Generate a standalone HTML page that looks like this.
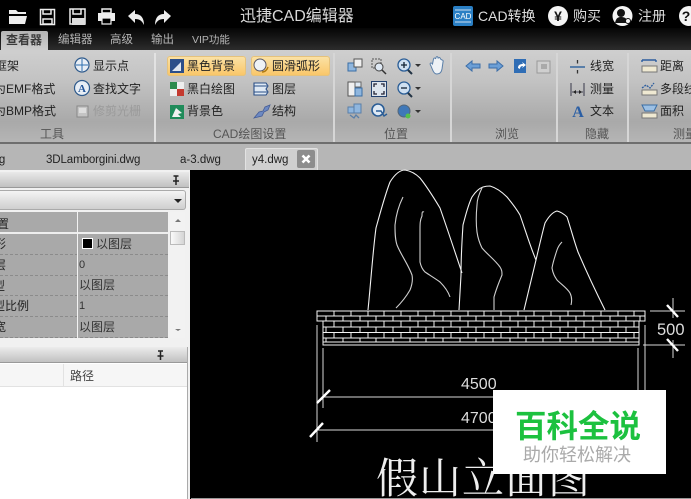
<!DOCTYPE html>
<html lang="zh"><head><meta charset="utf-8"><title>迅捷CAD编辑器</title>
<style>
html,body{margin:0;padding:0;background:#000}
#p{position:relative;width:691px;height:499px;overflow:hidden;font-family:"Liberation Sans","Noto Sans CJK SC",sans-serif;font-size:12px;color:#222}
.b{position:absolute}
.t{position:absolute;white-space:nowrap;line-height:16px;height:16px;filter:blur(.3px)}
svg{position:absolute;left:0;top:0}
</style></head><body><div id="p">
<!-- chrome backgrounds -->
<div class="b" style="left:0;top:0;width:691px;height:30px;background:#000"></div>
<div class="b" style="left:0;top:28px;width:691px;height:22px;background:linear-gradient(#050505,#2c2c2c)"></div>
<div class="b" style="left:0;top:50px;width:691px;height:92px;background:linear-gradient(#cfcfcf 0,#c2c2c2 35%,#a9a9a9 78%,#b5b5b5 100%)"></div>
<div class="b" style="left:0;top:142px;width:691px;height:2px;background:#6e6e6e"></div>
<div class="b" style="left:0;top:144px;width:691px;height:26px;background:#b6b6b6"></div>
<div class="b" style="left:1px;top:31px;width:47px;height:20px;background:linear-gradient(#b4b4b4,#cfcfcf);border-radius:2px 2px 0 0"></div>
<!-- ribbon separators -->
<div class="b" style="left:154px;top:53px;width:2px;height:89px;background:#e2e2e2"></div>
<div class="b" style="left:333px;top:53px;width:2px;height:89px;background:#d6d6d6"></div>
<div class="b" style="left:450px;top:53px;width:2px;height:89px;background:#d6d6d6"></div>
<div class="b" style="left:556px;top:53px;width:2px;height:89px;background:#d6d6d6"></div>
<div class="b" style="left:627px;top:53px;width:2px;height:89px;background:#d6d6d6"></div>
<!-- orange buttons -->
<div class="b" style="left:167px;top:56px;width:79px;height:20px;border-radius:3px;background:linear-gradient(#fbe3a8,#f9c566);box-shadow:0 0 0 1px #e5c27c inset"></div>
<div class="b" style="left:251px;top:56px;width:79px;height:20px;border-radius:3px;background:linear-gradient(#fbe3a8,#f9c566);box-shadow:0 0 0 1px #e5c27c inset"></div>
<!-- active doc tab -->
<div class="b" style="left:245px;top:148px;width:73px;height:22px;background:#cfcfcf;border:1px solid #e2e2e2;border-bottom:0;box-sizing:border-box;border-radius:2px 2px 0 0"></div>
<div class="b" style="left:297px;top:150px;width:18px;height:18px;background:#8d8d8d;border-radius:2px"></div>
<!-- left panel -->
<div class="b" style="left:0;top:170px;width:190px;height:329px;background:#f1f1f1"></div>
<div class="b" style="left:0;top:172px;width:189px;height:15px;background:linear-gradient(#e9e9e9,#c1c1c1);border-bottom:1px solid #999"></div>
<div class="b" style="left:0;top:190px;width:186px;height:20px;background:linear-gradient(#f4f4f4,#cfcfcf);border:1px solid #aaa;border-left:0;box-sizing:border-box;border-radius:0 3px 3px 0"></div>
<div class="b" style="left:0;top:212px;width:168px;height:126px;background:#a9a9a9"></div>
<div class="b" style="left:0;top:232px;width:168px;height:2px;background:#eee"></div>
<div class="b" style="left:0;top:254px;width:168px;border-top:1px dashed #8b8b8b"></div>
<div class="b" style="left:0;top:275px;width:168px;border-top:1px dashed #8b8b8b"></div>
<div class="b" style="left:0;top:295px;width:168px;border-top:1px dashed #8b8b8b"></div>
<div class="b" style="left:0;top:316px;width:168px;border-top:1px dashed #8b8b8b"></div>
<div class="b" style="left:0;top:337px;width:168px;border-top:1px dashed #8b8b8b"></div>
<div class="b" style="left:77px;top:212px;width:1px;height:126px;background:#f2f2f2"></div>
<div class="b" style="left:170px;top:212px;width:15px;height:126px;background:#f2f2f2"></div>
<div class="b" style="left:170px;top:231px;width:15px;height:14px;background:linear-gradient(90deg,#fafafa,#d5d5d5);border:1px solid #bbb;box-sizing:border-box"></div>
<div class="b" style="left:0;top:347px;width:187px;height:15px;background:linear-gradient(#ececec,#c1c1c1);border-bottom:1px solid #999"></div>
<div class="b" style="left:0;top:363px;width:187px;height:136px;background:#fff"></div>
<div class="b" style="left:0;top:364px;width:187px;height:23px;background:#f6f6f6;border-bottom:1px solid #e2e2e2;box-sizing:border-box"></div>
<div class="b" style="left:63px;top:364px;width:1px;height:23px;background:#e2e2e2"></div>
<div class="b" style="left:187px;top:347px;width:1px;height:152px;background:#aaa"></div>

<!-- CAD drawing -->
<svg width="691" height="499" viewBox="0 0 691 499" fill="none">
<defs><clipPath id="cap"><rect x="317" y="311" width="328" height="10"/></clipPath><clipPath id="bod"><rect x="323" y="321" width="315" height="24"/></clipPath></defs>
<g stroke="#f2f2f2" stroke-width="1.1">
<path d="M368 310C371 280 373 250 376 228C381 210 385 195 390 182C395 174 400 170 405 170C411 171 416 174 420 178C428 188 434 198 440 208C447 228 455 252 462 273"/>
<path d="M459 310L461 275C461 258 462 240 463 225C466 214 468 205 472 197C476 191 480 188 483 187C486 186 488 186 490 186C497 188 502 192 507 197C512 203 516 208 520 215C526 232 530 246 536 260"/>
<path d="M524 310L536 260C539 247 542 234 545 223C549 216 553 212 557 211C561 212 564 214 567 217C571 229 574 241 578 252C587 273 596 292 605 310"/>
</g>
<g stroke="#cfcfcf" stroke-width="1.1">
<path d="M403 197C398 207 396 215 395 225C395 232 395 239 397 245C401 255 408 264 412 275C413 280 412 285 410 290C406 297 401 303 396 308"/>
<path d="M424 212C422 211 422 213 422 216C420 220 420 224 420 230L420 262C421 267 423 270 425 272C431 276 436 279 440 282C445 287 448 291 450 297"/>
<path d="M482 188C479 194 477 199 477 205C476 215 476 224 477 232C478 239 480 244 482 248C488 255 495 260 500 267C502 270 502 272 502 275C499 282 496 290 494 297L494 310"/>
<path d="M562 242C559 245 558 247 557 250C555 256 553 262 552 268C553 274 555 277 557 280C562 285 567 288 570 293C572 297 572 301 571 305"/>
</g>
<!-- bricks -->
<g stroke="#f4f4f4" stroke-width="1">
<path d="M317 311H645V321H639V345H323V321H317Z"/>
<path d="M317 316H645M323 321H639M323 327H639M323 332.500H639M323 338H639M323 342H639"/>
</g>
<g stroke="#f4f4f4" stroke-width="1" clip-path="url(#cap)">
<path d="M334 311v5M351 311v5M368 311v5M384 311v5M401 311v5M418 311v5M434 311v5M451 311v5M468 311v5M484 311v5M501 311v5M518 311v5M534 311v5M551 311v5M568 311v5M584 311v5M601 311v5M618 311v5M634 311v5"/>
<path d="M326 316v5M343 316v5M360 316v5M376 316v5M393 316v5M410 316v5M426 316v5M443 316v5M460 316v5M476 316v5M493 316v5M510 316v5M526 316v5M543 316v5M560 316v5M576 316v5M593 316v5M610 316v5M626 316v5M640 316v5"/>
</g>
<g stroke="#f4f4f4" stroke-width="1" clip-path="url(#bod)">
<path d="M334 321v6M351 321v6M368 321v6M384 321v6M401 321v6M418 321v6M434 321v6M451 321v6M468 321v6M484 321v6M501 321v6M518 321v6M534 321v6M551 321v6M568 321v6M584 321v6M601 321v6M618 321v6M634 321v6"/>
<path d="M326 327v6M343 327v6M360 327v6M376 327v6M393 327v6M410 327v6M426 327v6M443 327v6M460 327v6M476 327v6M493 327v6M510 327v6M526 327v6M543 327v6M560 327v6M576 327v6M593 327v6M610 327v6M626 327v6"/>
<path d="M334 333v5M351 333v5M368 333v5M384 333v5M401 333v5M418 333v5M434 333v5M451 333v5M468 333v5M484 333v5M501 333v5M518 333v5M534 333v5M551 333v5M568 333v5M584 333v5M601 333v5M618 333v5M634 333v5"/>
<path d="M326 338v4M343 338v4M360 338v4M376 338v4M393 338v4M410 338v4M426 338v4M443 338v4M460 338v4M476 338v4M493 338v4M510 338v4M526 338v4M543 338v4M560 338v4M576 338v4M593 338v4M610 338v4M626 338v4"/>
</g>
<!-- dimensions -->
<g stroke="#d8d8d8" stroke-width="1">
<path d="M650 311H685M673 298V318M643 345H685M673 340V358"/>
<path d="M317 325V442M323 348V408M638 348V392M645 325V392M323 397H493M316 430H493"/>
</g>
<g stroke="#fff" stroke-width="2.400">
<path d="M667 305L678 317M667 339L678 351M317 403L330 390M310 437L323 423"/>
</g>
</svg>
<div class="t" style="left:657px;top:322px;font-size:16.500px;color:#ddd">500</div>
<div class="t" style="left:461px;top:377px;font-size:16px;color:#ddd">4500</div>
<div class="t" style="left:461px;top:411px;font-size:16px;color:#ddd">4700</div>
<div class="t" style="left:376px;top:454px;height:52px;line-height:52px;font-size:42px;letter-spacing:1px;color:#eee;font-family:'Liberation Serif','Noto Serif CJK SC',serif">假山立面图</div>
<div class="b" style="left:191px;top:498px;width:500px;height:1px;background:#999"></div>
<!-- watermark -->
<div class="b" style="left:493px;top:390px;width:173px;height:84px;background:#fff"></div>
<div class="t" style="left:515px;top:408px;height:36px;line-height:36px;font-size:31.500px;font-weight:bold;color:#1cc13f">百科全说</div>
<div class="t" style="left:523px;top:444px;height:22px;line-height:22px;font-size:18px;color:#aaa">助你轻松解决</div>

<!-- icons -->
<svg width="691" height="499" viewBox="0 0 691 499" fill="none">
<!-- top bar -->
<path d="M9 10h7l2 2h8v2H14l-5 0zM9 16h18l-2 8H9z" fill="#eee"/>
<path d="M40.500 9.500h14v15h-14z" stroke="#eee" stroke-width="1.500"/><path d="M43 9v5h8V9M43 19h9v5h-9z" stroke="#eee" stroke-width="1.500"/>
<path d="M70 9h15v15H70z" stroke="#eee" stroke-width="1.500"/><path d="M73 9v5h8V9" stroke="#eee" stroke-width="1.500"/><rect x="72" y="18" width="13" height="7" fill="#ddd"/>
<path d="M102 9h9v4h-9z" stroke="#eee" stroke-width="1.500"/><path d="M98 13h17v8h-17z" fill="#eee"/><path d="M102 18h9v6h-9z" fill="#000" stroke="#eee" stroke-width="1.200"/>
<path d="M128 16l7-6v4c6 0 9 4 9 11c-2-4-4-6-9-6v4z" fill="#eee"/>
<path d="M171 16l-7-6v4c-6 0-9 4-9 11c2-4 4-6 9-6v4z" fill="#eee"/>
<!-- top right -->
<rect x="453" y="6" width="20" height="20" rx="2" fill="#2a7fc4"/><path d="M455 10h16M455 22h16" stroke="#cde" stroke-width="1"/>
<text x="463" y="19" font-size="8" fill="#fff" text-anchor="middle" font-family="Liberation Sans">CAD</text>
<circle cx="558" cy="16" r="10" fill="#f4f4f4"/><text x="558" y="21" font-size="14" font-weight="bold" fill="#111" text-anchor="middle" font-family="Liberation Sans">¥</text>
<circle cx="622.500" cy="16" r="10" fill="#f4f4f4"/><circle cx="621" cy="13" r="4" fill="#111"/><path d="M615 23c1-5 3-6 6-6s5 1 6 3v3z" fill="#111"/><circle cx="628" cy="21" r="2.500" fill="#f4f4f4" stroke="#111"/>
<circle cx="689" cy="16" r="10" fill="#f4f4f4"/><text x="686" y="21" font-size="14" font-weight="bold" fill="#111" text-anchor="middle" font-family="Liberation Sans">?</text>
<!-- col1 -->
<circle cx="82" cy="65" r="7" fill="#e8eef5" stroke="#2e5a8c" stroke-width="1.200"/><path d="M82 59v12M76 65h12" stroke="#2e6fb0"/>
<circle cx="82" cy="88" r="7.500" fill="#e8eef5" stroke="#2e5a8c" stroke-width="1.200"/><text x="82" y="92" font-size="11" font-weight="bold" fill="#24569a" text-anchor="middle" font-family="Liberation Serif">A</text>
<path d="M77 106h11v11H77z" fill="#c4c4c4" stroke="#888"/><path d="M79 108h7v5h-7z" fill="#ddd"/>
<!-- col2 -->
<rect x="170" y="59" width="14" height="14" fill="#2c4f8a"/><path d="M172 71l9-9v9z" fill="#dfe6ef"/>
<rect x="170" y="82" width="7" height="7" fill="#2e8a4c"/><rect x="177" y="82" width="7" height="7" fill="#eee"/><rect x="170" y="89" width="7" height="7" fill="#eee"/><rect x="177" y="89" width="7" height="7" fill="#c43a30"/>
<rect x="170" y="105" width="14" height="14" fill="#1f8b5a"/><path d="M172 117l4-9 6 5-4 1 3 3z" fill="#f1f1f1"/>
<circle cx="260" cy="65" r="6" fill="#eef2f6" stroke="#556"/><path d="M262 72c3 0 5-2 6-5" stroke="#b07a10" stroke-width="1.400"/>
<path d="M254 83h12l2 3-2 3 2 3-2 3h-12zM254 86h13M254 92h13" fill="#dfe9f4" stroke="#2a4e86" stroke-width="1.100"/>
<path d="M254 118l5-6 4-1 2-4 5-2-2 5-4 2-2 4z" fill="#6d89c2" stroke="#445c96" stroke-width=".8"/>
<!-- position -->
<path d="M348 63h8v8h-8z" fill="#8fb6de" stroke="#3a6ea5"/><path d="M354 59h8v8h-8z" fill="#f0f0f0" stroke="#555"/>
<path d="M372 59h9v9h-9z" stroke="#555" stroke-dasharray="2 1"/><circle cx="379" cy="67" r="4" fill="#dfe9f4" stroke="#444"/><path d="M382 70l4 4" stroke="#333" stroke-width="1.500"/>
<circle cx="404" cy="65" r="6" fill="#cfe0f1" stroke="#2a5d96" stroke-width="1.300"/><path d="M401 65h6M404 62v6" stroke="#123" stroke-width="1.300"/><path d="M408 70l4 4" stroke="#234" stroke-width="2"/><path d="M415 64h6l-3 3z" fill="#333"/>
<path d="M431 66c-2-3 0-4 1.500-2l1-5c.5-1.500 2-1 2 0l.5-1.500c.5-1.500 2-1 2 .5l.5 0c1-1 2 0 2 1l1.500 1c1 0 1.500 1 1 2l-1 7c-.5 3-2 5-5 5-3 0-4-3-6-8z" fill="#eef2f6" stroke="#5a7fa8"/>
<path d="M348 82h7v14h-7z" fill="#f0f0f0" stroke="#555"/><path d="M355 88h7v8h-7z" fill="#8fb6de" stroke="#3a6ea5"/><path d="M355 82h6v5h-6z" fill="#dfe9f4" stroke="#666"/>
<rect x="371.500" y="81.500" width="15" height="15" fill="#dde5ee" stroke="#22406e"/><path d="M374 87v-3h3M384 87v-3h-3M374 91v3h3M384 91v3h-3" stroke="#223" stroke-width="1.300"/>
<circle cx="404" cy="88" r="6" fill="#cfe0f1" stroke="#2a5d96" stroke-width="1.300"/><path d="M401 88h6" stroke="#123" stroke-width="1.300"/><path d="M408 93l4 4" stroke="#234" stroke-width="2"/><path d="M415 87h6l-3 3z" fill="#333"/>
<path d="M348 107h6v6h-6zM354 104h7v9h-7z" fill="#8fb6de" stroke="#5a7fa8"/><path d="M350 115l4 3 2-3 3 3" stroke="#5a7fa8" stroke-width="1.300"/>
<circle cx="378" cy="110" r="6" fill="#dfe9f4" stroke="#2a5d96" stroke-width="1.600"/><path d="M376 111h5l3 5 3-2" stroke="#2a5d96" stroke-width="1.400"/>
<circle cx="404" cy="111" r="6" fill="#3f78b8" stroke="#567"/><circle cx="408" cy="116" r="2.500" fill="#56c04a"/><path d="M415 110h6l-3 3z" fill="#333"/>
<!-- browse -->
<path d="M466 66l6-5v3h8v4h-8v3z" fill="#6c9fd6" stroke="#3c6ea8"/>
<path d="M503 66l-6-5v3h-8v4h8v3z" fill="#6c9fd6" stroke="#3c6ea8"/>
<path d="M514 59h12v14h-12z" fill="#2f6db5"/><path d="M518 68c0-3 2-4 5-4l-1-2 4 3-4 3 1-2c-2 0-3 1-3 3z" fill="#fff"/>
<path d="M537 61h13v12h-13z" fill="#cfcfcf" stroke="#999"/><path d="M541 64h6v5h-6z" fill="#aaa"/>
<!-- hidden -->
<path d="M570 67h15" stroke="#35679f" stroke-width="1.500"/><path d="M577.500 60v3.500M577.500 70v3.500" stroke="#333" stroke-width="1.300"/>
<path d="M571 83v13M584 83v13M572 92h11" stroke="#445" stroke-width="1.100"/><path d="M573 92l3-2v4zM582 92l-3-2v4z" fill="#222"/>
<text x="578" y="117" font-size="16" font-weight="bold" fill="#2a5ea4" text-anchor="middle" font-family="Liberation Serif">A</text>
<!-- measure -->
<path d="M642 60h14M642 60v2M656 60v2" stroke="#2c5d9e" stroke-width="1.400"/><rect x="642" y="66" width="15" height="6" fill="#efe9d2" stroke="#777"/>
<path d="M642 88l4-3 4 3 4-5" stroke="#2c5d9e" stroke-width="1.300" stroke-dasharray="2 1"/><rect x="642" y="90" width="15" height="5" fill="#efe9d2" stroke="#777"/>
<path d="M642 105h15l-3 6h-9z" fill="#9cc0e4" stroke="#3a6ea5"/><rect x="642" y="113" width="15" height="5" fill="#efe9d2" stroke="#777"/>
<!-- doc tab close -->
<path d="M302.500 155.500l7 7M309.500 155.500l-7 7" stroke="#fff" stroke-width="2.600"/>
<!-- panel pins, arrows -->
<path d="M173.500 176h5M176 176v5M173 181h6M176 181v4" stroke="#222" stroke-width="1.500"/>
<path d="M158 351h5M160.500 351v5M157.500 356h6M160.500 356v4" stroke="#222" stroke-width="1.500"/>
<path d="M174 199h8l-4 4z" fill="#222"/>
<path d="M175 222h6l-3-3z" fill="#777"/><path d="M175 329h6l-3 2z" fill="#777"/>
<rect x="82.500" y="238.500" width="10" height="10" fill="#000" stroke="#fff"/>
</svg>

<!-- text: top -->
<div class="t" style="left:240px;top:9px;font-size:16px;color:#d8d8d8">迅捷CAD编辑器</div>
<div class="t" style="left:478px;top:8px;font-size:14px;color:#ddd">CAD转换</div>
<div class="t" style="left:573px;top:8px;font-size:14px;color:#ddd">购买</div>
<div class="t" style="left:638px;top:8px;font-size:14px;color:#ddd">注册</div>
<div class="t" style="left:6px;top:32px;font-size:12px;color:#3b3b3b;font-weight:bold">查看器</div>
<div class="t" style="left:58px;top:32px;font-size:11.500px;color:#b4b4b4">编辑器</div>
<div class="t" style="left:110px;top:32px;font-size:11.500px;color:#b4b4b4">高级</div>
<div class="t" style="left:151px;top:32px;font-size:11.500px;color:#b4b4b4">输出</div>
<div class="t" style="left:192px;top:32px;font-size:10.500px;color:#b4b4b4">VIP功能</div>
<!-- ribbon text -->
<div class="t" style="left:-5px;top:58px">框架</div>
<div class="t" style="left:-6px;top:81px">为EMF格式</div>
<div class="t" style="left:-6px;top:103px">为BMP格式</div>
<div class="t" style="left:93px;top:58px">显示点</div>
<div class="t" style="left:93px;top:81px">查找文字</div>
<div class="t" style="left:93px;top:103px;color:#9a9a9a">修剪光栅</div>
<div class="t" style="left:40px;top:126px;color:#555">工具</div>
<div class="t" style="left:187px;top:58px;color:#222">黑色背景</div>
<div class="t" style="left:272px;top:58px;color:#222">圆滑弧形</div>
<div class="t" style="left:187px;top:81px">黑白绘图</div>
<div class="t" style="left:272px;top:81px">图层</div>
<div class="t" style="left:187px;top:103px">背景色</div>
<div class="t" style="left:272px;top:103px">结构</div>
<div class="t" style="left:213px;top:126px;color:#555">CAD绘图设置</div>
<div class="t" style="left:384px;top:126px;color:#555">位置</div>
<div class="t" style="left:495px;top:126px;color:#555">浏览</div>
<div class="t" style="left:590px;top:58px">线宽</div>
<div class="t" style="left:590px;top:81px">测量</div>
<div class="t" style="left:590px;top:103px">文本</div>
<div class="t" style="left:585px;top:126px;color:#555">隐藏</div>
<div class="t" style="left:660px;top:58px">距离</div>
<div class="t" style="left:660px;top:81px">多段线</div>
<div class="t" style="left:660px;top:103px">面积</div>
<div class="t" style="left:673px;top:126px;color:#555">测量</div>
<!-- doc tabs -->
<div class="t" style="left:-19px;top:152px;font-size:11.500px">.dwg</div>
<div class="t" style="left:46px;top:152px;font-size:11.500px;letter-spacing:-.1px">3DLamborgini.dwg</div>
<div class="t" style="left:180px;top:152px;font-size:11.500px">a-3.dwg</div>
<div class="t" style="left:252px;top:152px;font-size:11.500px">y4.dwg</div>
<!-- property table -->
<div class="t" style="left:-15px;top:216px;color:#222">位置</div>
<div class="t" style="left:-6px;top:236px;color:#222">形</div>
<div class="t" style="left:-6px;top:257px;color:#222">层</div>
<div class="t" style="left:-7px;top:278px;color:#222">型</div>
<div class="t" style="left:-7px;top:298px;color:#222">型比例</div>
<div class="t" style="left:-6px;top:319px;color:#222">宽</div>
<div class="t" style="left:96px;top:236px;color:#333">以图层</div>
<div class="t" style="left:79px;top:257px;font-size:11px;color:#333">0</div>
<div class="t" style="left:79px;top:277px;color:#333">以图层</div>
<div class="t" style="left:79px;top:298px;font-size:11px;color:#333">1</div>
<div class="t" style="left:79px;top:319px;color:#333">以图层</div>
<div class="t" style="left:70px;top:368px;color:#444">路径</div>
</div></body></html>
